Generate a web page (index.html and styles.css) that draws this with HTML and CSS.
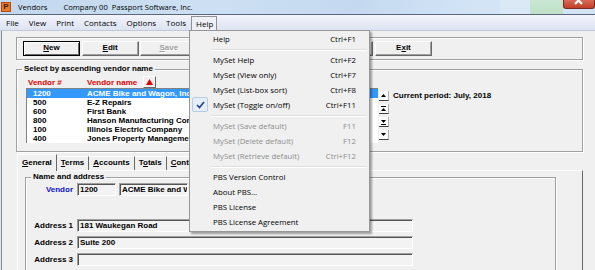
FILE: index.html
```html
<!DOCTYPE html>
<html>
<head>
<meta charset="utf-8">
<title>Vendors</title>
<link rel="stylesheet" href="styles.css">
</head>
<body>
<div class="win">
  <div class="titlebar">
    <span class="appicon">P</span>
    <span class="ttl">Vendors</span>
    <span class="ttl company">Company 00&nbsp; Passport Software, Inc.</span>
    <span class="tb-light"></span>
    <span class="tb-green"></span>
    <span class="close"><svg width="30" height="9" viewBox="0 0 30 9"><path d="M11 -3 L18 4 M18 -3 L11 4" stroke="#fff" stroke-width="2.2" fill="none"/></svg></span>
  </div>
  <div class="menubar">
    <span class="mi">File</span>
    <span class="mi">View</span>
    <span class="mi">Print</span>
    <span class="mi">Contacts</span>
    <span class="mi">Options</span>
    <span class="mi">Tools</span>
    <span class="mi open">Help</span>
  </div>
  <div class="client">
    <div class="btnbox">
      <div class="btns">
        <div class="btn default"><u>N</u>ew</div>
        <div class="btn"><u>E</u>dit</div>
        <div class="btn disabled"><u>S</u>ave</div>
        <div class="btn"><u>D</u>elete</div>
        <div class="btn"><u>C</u>ancel</div>
        <div class="btn">N<u>o</u>tes</div>
        <div class="btn">E<u>x</u>it</div>
      </div>
    </div>

    <div class="group sel">
      <div class="glabel">Select by ascending vendor name</div>
      <div class="lhead">
        <span class="hnum">Vendor #</span>
        <span class="hname">Vendor name</span>
        <span class="sortbtn"><svg width="9" height="8" viewBox="0 0 9 8"><path d="M4.5 1 L8 7 L1 7 Z" fill="#e00000"/></svg></span>
      </div>
      <div class="lrow">
        <div class="listbox">
          <div class="item selected"><span class="num">1200</span><span class="nm">ACME Bike and Wagon, Inc.</span></div>
          <div class="item"><span class="num">500</span><span class="nm">E-Z Repairs</span></div>
          <div class="item"><span class="num">600</span><span class="nm">First Bank</span></div>
          <div class="item"><span class="num">800</span><span class="nm">Hanson Manufacturing Company</span></div>
          <div class="item"><span class="num">100</span><span class="nm">Illinois Electric Company</span></div>
          <div class="item"><span class="num">400</span><span class="nm">Jones Property Management</span></div>
        </div>
        <div class="scrollbtns">
          <span class="sb"><svg width="9" height="9" viewBox="0 0 9 9"><path d="M4.5 3 L7 6 L2 6 Z" fill="#000"/></svg></span>
          <span class="sb"><svg width="9" height="10" viewBox="0 0 9 10"><path d="M2 2.5 H7" stroke="#000"/><path d="M4.5 4 L7 7 L2 7 Z" fill="#000"/></svg></span>
          <span class="sb"><svg width="9" height="10" viewBox="0 0 9 10"><path d="M2 3 L7 3 L4.5 6 Z" fill="#000"/><path d="M2 7.5 H7" stroke="#000"/></svg></span>
          <span class="sb"><svg width="9" height="9" viewBox="0 0 9 9"><path d="M2 3 L7 3 L4.5 6 Z" fill="#000"/></svg></span>
        </div>
        <div class="period">Current period: July, 2018</div>
      </div>
    </div>

    <div class="tabs">
      <div class="tab active"><u>G</u>eneral</div>
      <div class="tab"><u>T</u>erms</div>
      <div class="tab"><u>A</u>ccounts</div>
      <div class="tab">T<u>o</u>tals</div>
      <div class="tab"><u>C</u>ontacts</div>
    </div>
    <div class="tabpanel">
      <div class="group addr">
        <div class="glabel">Name and address</div>
        <div class="frow vrow">
          <span class="flabel blue">Vendor</span>
          <span class="field code">1200</span>
          <span class="field vname">ACME Bike and Wagon, Inc.</span>
        </div>
        <div class="frow arow first">
          <span class="flabel">Address 1</span>
          <span class="field wide">181 Waukegan Road</span>
        </div>
        <div class="frow arow">
          <span class="flabel">Address 2</span>
          <span class="field wide">Suite 200</span>
        </div>
        <div class="frow arow">
          <span class="flabel">Address 3</span>
          <span class="field wide"></span>
        </div>
      </div>
    </div>
  </div>

  <div class="dropdown">
    <div class="dd-item"><span class="ic"></span><span class="lbl">Help</span><span class="sc">Ctrl+F1</span></div>
    <div class="dd-sep"></div>
    <div class="dd-item"><span class="ic"></span><span class="lbl">MySet Help</span><span class="sc">Ctrl+F2</span></div>
    <div class="dd-item"><span class="ic"></span><span class="lbl">MySet (View only)</span><span class="sc">Ctrl+F7</span></div>
    <div class="dd-item"><span class="ic"></span><span class="lbl">MySet (List-box sort)</span><span class="sc">Ctrl+F8</span></div>
    <div class="dd-item"><span class="ic"><span class="checkbox"><svg width="11" height="10" viewBox="0 0 11 10"><path d="M2 5 L4.5 7.5 L9 2" stroke="#1f3f94" stroke-width="1.6" fill="none"/></svg></span></span><span class="lbl">MySet (Toggle on/off)</span><span class="sc">Ctrl+F11</span></div>
    <div class="dd-sep"></div>
    <div class="dd-item dis"><span class="ic"></span><span class="lbl">MySet (Save default)</span><span class="sc">F11</span></div>
    <div class="dd-item dis"><span class="ic"></span><span class="lbl">MySet (Delete default)</span><span class="sc">F12</span></div>
    <div class="dd-item dis"><span class="ic"></span><span class="lbl">MySet (Retrieve default)</span><span class="sc">Ctrl+F12</span></div>
    <div class="dd-sep"></div>
    <div class="dd-item"><span class="ic"></span><span class="lbl">PBS Version Control</span><span class="sc"></span></div>
    <div class="dd-item"><span class="ic"></span><span class="lbl">About PBS...</span><span class="sc"></span></div>
    <div class="dd-item"><span class="ic"></span><span class="lbl">PBS License</span><span class="sc"></span></div>
    <div class="dd-item"><span class="ic"></span><span class="lbl">PBS License Agreement</span><span class="sc"></span></div>
  </div>
</div>
</body>
</html>
```

FILE: styles.css
```css
* { box-sizing: border-box; }
html, body { margin: 0; padding: 0; }
body {
  width: 595px;
  height: 270px;
  overflow: hidden;
  background: #dbe6f3;
  font-family: "Liberation Sans", Arial, sans-serif;
  font-size: 8px;
  font-weight: bold;
  color: #000;
}
u { text-decoration: underline; text-underline-offset: 1px; }
.win {
  position: relative;
  width: 595px;
  height: 270px;
  display: flex;
  flex-direction: column;
}

/* title bar */
.titlebar {
  height: 15px;
  flex: none;
  display: flex;
  align-items: center;
  background: linear-gradient(90deg, #c2d7ee 0%, #cde0f3 35%, #c4d9f0 60%, #d3e4f6 80%);
  border-bottom: 1px solid #5b6778;
  font-family: "Open Sans", "Noto Sans", sans-serif;
  font-weight: normal;
  font-size: 7.6px;
  color: #000;
  padding-bottom: 1px;
}
.appicon {
  width: 10px;
  height: 10px;
  margin-left: 1px;
  background: #ec7a22;
  border: 1px solid #b04c10;
  color: #3b1a05;
  font-family: "Liberation Sans", sans-serif;
  font-weight: bold;
  font-size: 8px;
  line-height: 8px;
  text-align: center;
}
.ttl { margin-left: 7px; line-height: 12px; }
.ttl.company { margin-left: 16px; }
.tb-light { margin-left: auto; width: 30px; height: 14px; background: #dbe9f7; }
.tb-green { width: 33px; height: 14px; background: linear-gradient(180deg, #c9e7d2, #bfe0c9); }
.close {
  width: 32px;
  height: 9px;
  align-self: flex-start;
  background: linear-gradient(180deg, #d86a55, #c0402a);
  border: 1px solid #7a2a1e;
  border-top: none;
  border-radius: 0 0 3px 3px;
  display: block;
  line-height: 0;
}

/* menu bar */
.menubar {
  height: 16px;
  flex: none;
  display: flex;
  align-items: center;
  padding-left: 1px;
  background: linear-gradient(180deg, #f3f5fb 0%, #e6eaf6 60%, #dde3f2 100%);
  border-bottom: 1px solid #c3c9d6;
  font-family: "Open Sans", "Noto Sans", sans-serif;
  font-weight: normal;
  font-size: 8px;
}
.mi { padding: 0 5px; line-height: 13px; }
.mi.open {
  padding: 0 3px 0 4px;
  margin-top: 1px;
  height: 15px;
  line-height: 13px;
  border: 1px solid #8e9096;
  border-bottom: none;
  background: #eef0f5;
}

/* client area */
.client {
  flex: 1;
  background: #f0f0f0;
  margin-left: 1px;
  border-left: 1px solid #8a8a8a;
  padding: 6px 0 0 14px;
  overflow: hidden;
}

.btnbox {
  width: 567px;
  height: 23px;
  border: 1px solid #a0a0a0;
  box-shadow: inset 1px 1px 0 #fff, 1px 1px 0 #fff;
  padding: 3px 0 0 6px;
}
.btns {
  width: 409px;
  display: flex;
  justify-content: space-between;
}
.btn {
  width: 57px;
  height: 15px;
  border: 1px solid;
  border-color: #fff #696969 #696969 #fff;
  box-shadow: inset -1px -1px 0 #a0a0a0;
  text-align: center;
  line-height: 12px;
  background: #f0f0f0;
}
.btn.default {
  border-color: #000;
  box-shadow: inset 1px 1px 0 #fff, inset -1px -1px 0 #696969;
}
.btn.disabled { color: #a0a0a0; text-shadow: 1px 1px 0 #fff; }

/* group boxes */
.group {
  border: 1px solid #a0a0a0;
  box-shadow: inset 1px 1px 0 #fff, 1px 1px 0 #fff;
}
.glabel {
  display: block;
  width: max-content;
  background: #f0f0f0;
  padding: 0 2px;
  line-height: 10px;
  height: 10px;
  margin-top: -6px;
}
.sel {
  width: 567px;
  height: 83px;
  margin-top: 9px;
  padding-left: 9px;
}
.sel .glabel { margin-left: -4px; }
.lhead {
  display: flex;
  align-items: center;
  height: 12px;
  margin-top: 2px;
  color: #e00000;
}
.hnum { margin-left: 2px; width: 59px; }
.sortbtn {
  width: 13px;
  height: 12px;
  margin-left: 6px;
  border: 1px solid;
  border-color: #fff #696969 #696969 #fff;
  display: flex;
  align-items: center;
  justify-content: center;
  background: #f0f0f0;
}
.lrow { display: flex; align-items: flex-start; }
.listbox {
  width: 352px;
  height: 55px;
  background: #fff;
  border-top: 1px solid #828282;
  border-left: 1px solid #828282;
  overflow: hidden;
}
.item {
  display: flex;
  height: 9px;
  line-height: 9px;
  white-space: nowrap;
}
.item .num { width: 60px; flex: none; padding-left: 6px; }
.item.selected { background: #3399ff; color: #fff; }
.scrollbtns {
  display: flex;
  flex-direction: column;
  gap: 3px;
  margin-top: 3px;
  margin-left: 1px;
}
.sb {
  width: 10px;
  height: 10px;
  background: #fbfbfb;
  border-bottom: 1px solid #404040;
  border-right: 1px solid #b0b0b0;
  display: flex;
  align-items: center;
  justify-content: center;
}
.period { margin-left: 4px; margin-top: 3px; line-height: 10px; white-space: nowrap; }

/* tabs */
.tabs {
  display: flex;
  height: 15px;
  margin-top: 3px;
  margin-left: 1px;
  align-items: flex-end;
}
.tab {
  height: 14px;
  padding: 0 4px;
  line-height: 12px;
  border-top: 1px solid #fff;
  border-right: 1px solid #696969;
  white-space: nowrap;
}
.tab.active {
  height: 17px;
  margin-bottom: -1px;
  border-left: 1px solid #fff;
  background: #f0f0f0;
  position: relative;
  z-index: 1;
  line-height: 15px;
}
.tabpanel {
  width: 566px;
  height: 120px;
  margin-left: 1px;
  border-top: 1px solid #fff;
  border-left: 1px solid #fff;
  border-right: 1px solid #696969;
  padding: 6px 0 0 7px;
}
.addr {
  width: 531px;
  height: 120px;
  padding-left: 7px;
}
.addr .glabel { margin-left: -2px; }
.frow {
  display: flex;
  align-items: center;
  height: 13px;
}
.vrow { margin-top: 1px; }
.arow { margin-top: 4px; }
.arow.first { margin-top: 23px; }
.flabel { width: 40px; text-align: right; margin-right: 4px; white-space: nowrap; }
.flabel.blue { color: #1010d0; }
.field {
  height: 13px;
  line-height: 11px;
  padding-left: 2px;
  background: #f3f3f3;
  border: 1px solid;
  border-color: #a0a0a0 #fff #fff #a0a0a0;
  box-shadow: inset 1px 1px 0 #555;
  white-space: nowrap;
  overflow: hidden;
}
.field.code { width: 39px; }
.field.vname { width: 69px; margin-left: 3px; }
.field.wide { width: 336px; }

/* dropdown menu */
.dropdown {
  position: absolute;
  left: 189px;
  top: 30px;
  width: 181px;
  background: #f0f0f0;
  border: 1px solid #979797;
  box-shadow: 2px 2px 2px rgba(0, 0, 0, 0.35);
  padding: 0 1px 2px;
  font-family: "Open Sans", "Noto Sans", sans-serif;
  font-weight: normal;
  font-size: 7.8px;
  z-index: 5;
}
.dd-item {
  display: flex;
  align-items: center;
  height: 15px;
  padding-right: 12px;
  white-space: nowrap;
}
.dd-item .ic { width: 22px; height: 15px; display: flex; align-items: center; }
.dd-item .lbl { flex: 1; }
.dd-item .sc { text-align: right; }
.dd-item.dis { color: #8d8d8d; }
.checkbox {
  width: 16px;
  height: 15px;
  margin-left: 1px;
  border: 1px solid #b5cbe6;
  border-radius: 2px;
  background: #e5eef9;
  display: flex;
  align-items: center;
  justify-content: center;
}
.dd-sep {
  height: 6px;
  margin-left: 20px;
  margin-right: 1px;
  display: flex;
  align-items: center;
}
.dd-sep::before {
  content: "";
  display: block;
  width: 100%;
  height: 1px;
  background: #e0e0e0;
  box-shadow: 0 1px 0 #fff;
}
```
